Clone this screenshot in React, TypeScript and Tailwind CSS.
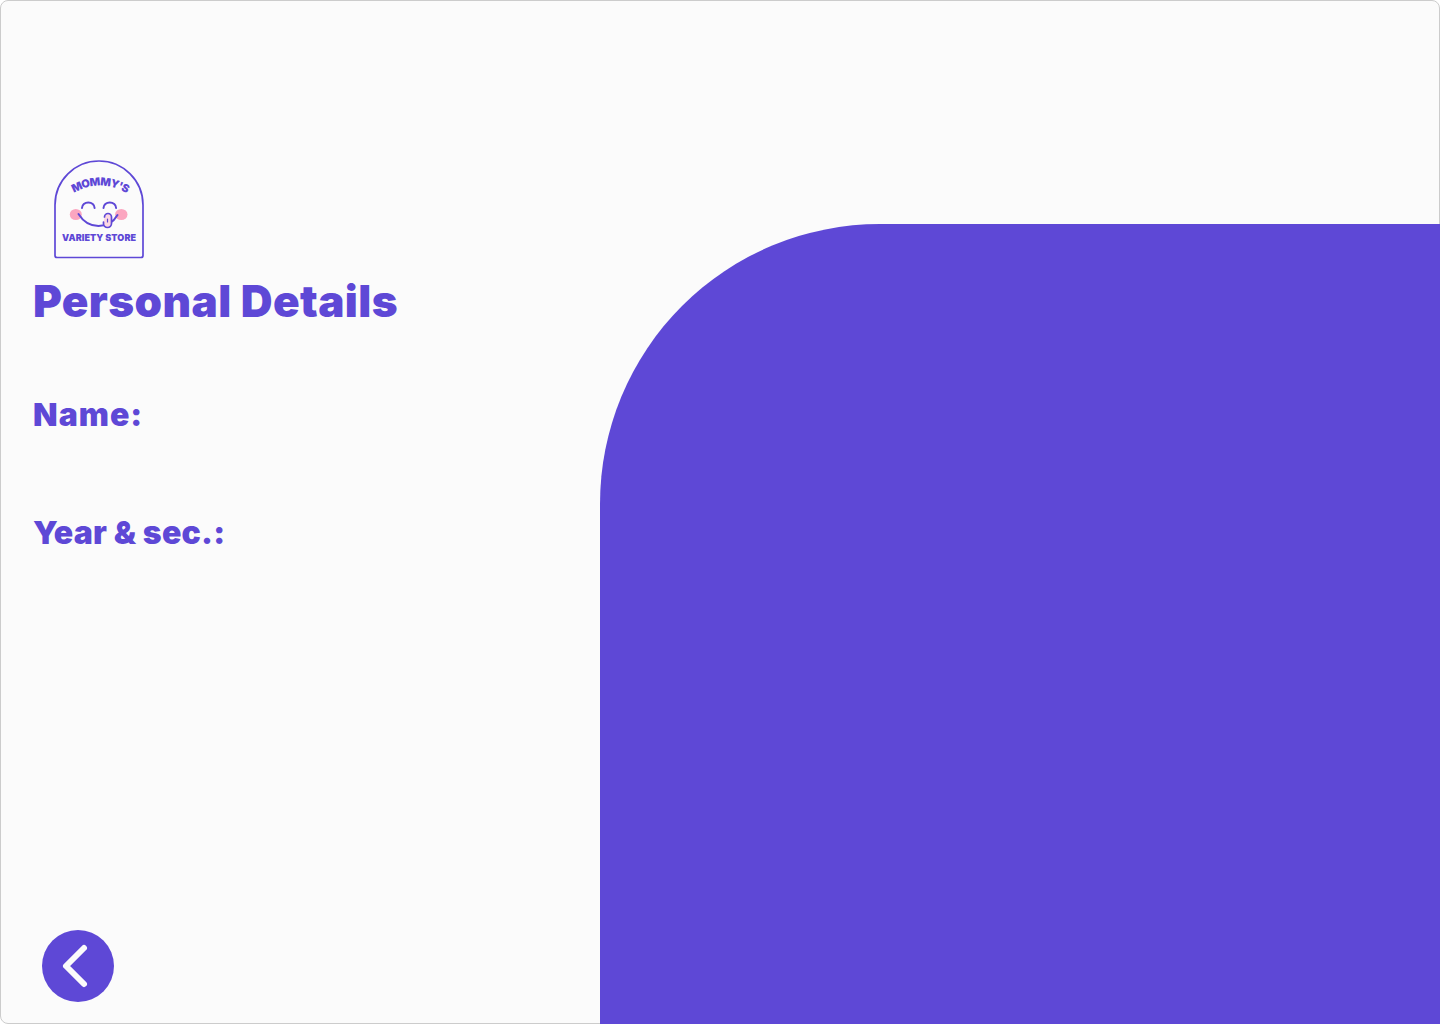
function Logo() {
  return (
    <svg width="90" height="100" viewBox="0 0 90 100" fill="none" className="block">
      <path
        d="M1 45A44 44 0 0 1 89 45V95.5a2 2 0 0 1-2 2H3a2 2 0 0 1-2-2Z"
        stroke="#5e48d6"
        strokeWidth="1.7"
        fill="#fbfbfb"
      />
      <ellipse cx="21.8" cy="54.5" rx="6" ry="5.5" fill="#fba6c0" />
      <ellipse cx="67.3" cy="54.5" rx="6.2" ry="5.5" fill="#fba6c0" />
      <path d="M28 48a6.3 5.6 0 0 1 12.6 0" stroke="#5e48d6" strokeWidth="2" strokeLinecap="round" />
      <path d="M49.5 48a6.3 5.6 0 0 1 12.6 0" stroke="#5e48d6" strokeWidth="2" strokeLinecap="round" />
      <path d="M24.5 54c5 8 12 12 20 12 8 0 15-4 19-11" stroke="#5e48d6" strokeWidth="2" strokeLinecap="round" />
      <path d="M49.5 62v1.5a4 4 0 0 0 8 0V57a3.5 3.5 0 0 0-7 0" fill="#fcd7e2" stroke="#5e48d6" strokeWidth="1.7" strokeLinecap="round" />
      <path d="M53.5 59v3" stroke="#5e48d6" strokeWidth="1.2" strokeLinecap="round" />
      <path id="logo-arc" d="M18 34Q46 17 74 34" />
      <text fontFamily="Inter, sans-serif" fontWeight="900" fontSize="11" fill="#5e48d6">
        <textPath href="#logo-arc" startOffset="2" textLength="56">
          MOMMY'S
        </textPath>
      </text>
      <text
        x="45"
        y="81"
        textAnchor="middle"
        textLength="74"
        fontFamily="Inter, sans-serif"
        fontWeight="900"
        fontSize="9"
        fill="#5e48d6"
      >
        VARIETY STORE
      </text>
    </svg>
  );
}

export default function App() {
  return (
    <div className="flex h-[1024px] w-[1440px] rounded-lg border border-[#cccccc] bg-[#fbfbfb] font-['Inter',sans-serif] text-[#5e48d6]">
      <div className="flex w-[599px] shrink-0 flex-col pl-[32px] pt-[159px]">
        <div className="pl-[21px]">
          <Logo />
        </div>
        <h1 className="mt-[16px] text-[44px] leading-[50px] font-black tracking-[0.4px]">Personal Details</h1>
        <p className="mt-[69px] text-[32px] leading-[40px] font-black tracking-[1px]">Name:</p>
        <p className="mt-[78px] text-[32px] leading-[40px] font-black tracking-[0.25px]">Year &amp; sec.:</p>
        <button className="mt-auto mb-[21px] ml-[9px] flex h-[72px] w-[72px] items-center justify-center rounded-full bg-[#5e48d6]">
          <svg width="72" height="72" viewBox="0 0 72 72" fill="none">
            <path d="M42 18 24 36 42 54" stroke="#fbfbfb" strokeWidth="6" strokeLinecap="round" strokeLinejoin="round" />
          </svg>
        </button>
      </div>
      <div className="-mr-px -mb-px mt-[223px] flex-1 rounded-tl-[280px] bg-[#5e48d6]" />
    </div>
  );
}
